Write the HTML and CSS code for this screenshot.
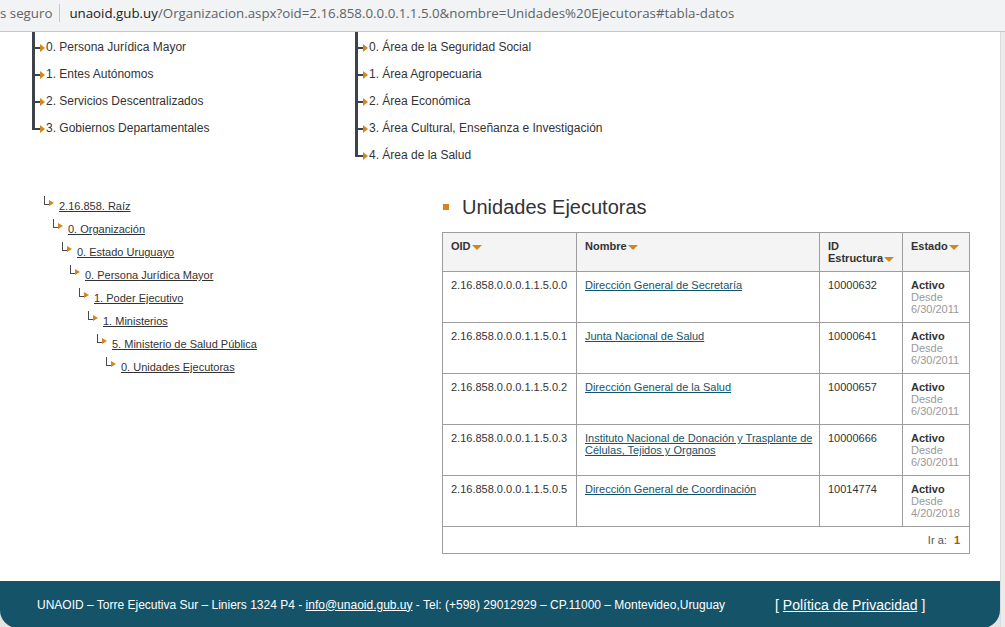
FILE: index.html
```
<!DOCTYPE html>
<html lang="es">
<head>
    <meta charset="UTF-8">
    <meta name="viewport" content="width=device-width, initial-scale=1.0">
    <title>Unidades Ejecutoras - UNAOID</title>
    <link rel="stylesheet" href="styles.css">
</head>
<body>
    <div class="omnibox">
        <span class="security">s seguro</span>
        <span class="divider"></span>
        <span class="url"><span class="host">unaoid.gub.uy</span>/Organizacion.aspx?oid=2.16.858.0.0.0.1.1.5.0&amp;nombre=Unidades%20Ejecutoras#tabla-datos</span>
    </div>

    <div class="window">
        <div class="page">
            <main class="content">
                <!-- hijos de los nodos anteriores -->
                <div class="branches">
                    <ul class="branch">
                        <li>0. Persona Jurídica Mayor</li>
                        <li>1. Entes Autónomos</li>
                        <li>2. Servicios Descentralizados</li>
                        <li>3. Gobiernos Departamentales</li>
                    </ul>
                    <ul class="branch">
                        <li>0. Área de la Seguridad Social</li>
                        <li>1. Área Agropecuaria</li>
                        <li>2. Área Económica</li>
                        <li>3. Área Cultural, Enseñanza e Investigación</li>
                        <li>4. Área de la Salud</li>
                    </ul>
                </div>

                <div class="detail">
                    <ul class="crumbs">
                        <li class="lvl-0"><a href="#">2.16.858. Raíz</a></li>
                        <li class="lvl-1"><a href="#">0. Organización</a></li>
                        <li class="lvl-2"><a href="#">0. Estado Uruguayo</a></li>
                        <li class="lvl-3"><a href="#">0. Persona Jurídica Mayor</a></li>
                        <li class="lvl-4"><a href="#">1. Poder Ejecutivo</a></li>
                        <li class="lvl-5"><a href="#">1. Ministerios</a></li>
                        <li class="lvl-6"><a href="#">5. Ministerio de Salud Pública</a></li>
                        <li class="lvl-7"><a href="#">0. Unidades Ejecutoras</a></li>
                    </ul>

                    <section class="listado" id="tabla-datos">
                        <h2>Unidades Ejecutoras</h2>
                        <table>
                            <colgroup>
                                <col class="col-oid">
                                <col class="col-nombre">
                                <col class="col-id">
                                <col class="col-estado">
                            </colgroup>
                            <thead>
                                <tr>
                                    <th><span class="nowrap">OID<span class="sort"></span></span></th>
                                    <th><span class="nowrap">Nombre<span class="sort"></span></span></th>
                                    <th>ID <span class="nowrap">Estructura<span class="sort"></span></span></th>
                                    <th><span class="nowrap">Estado<span class="sort"></span></span></th>
                                </tr>
                            </thead>
                            <tbody>
                                <tr>
                                    <td>2.16.858.0.0.0.1.1.5.0.0</td>
                                    <td><a href="#">Dirección General de Secretaría</a></td>
                                    <td>10000632</td>
                                    <td class="estado"><strong>Activo</strong><span class="desde">Desde 6/30/2011</span></td>
                                </tr>
                                <tr>
                                    <td>2.16.858.0.0.0.1.1.5.0.1</td>
                                    <td><a href="#">Junta Nacional de Salud</a></td>
                                    <td>10000641</td>
                                    <td class="estado"><strong>Activo</strong><span class="desde">Desde 6/30/2011</span></td>
                                </tr>
                                <tr>
                                    <td>2.16.858.0.0.0.1.1.5.0.2</td>
                                    <td><a href="#">Dirección General de la Salud</a></td>
                                    <td>10000657</td>
                                    <td class="estado"><strong>Activo</strong><span class="desde">Desde 6/30/2011</span></td>
                                </tr>
                                <tr>
                                    <td>2.16.858.0.0.0.1.1.5.0.3</td>
                                    <td><a href="#">Instituto Nacional de Donación y Trasplante de Células, Tejidos y Organos</a></td>
                                    <td>10000666</td>
                                    <td class="estado"><strong>Activo</strong><span class="desde">Desde 6/30/2011</span></td>
                                </tr>
                                <tr>
                                    <td>2.16.858.0.0.0.1.1.5.0.5</td>
                                    <td><a href="#">Dirección General de Coordinación</a></td>
                                    <td>10014774</td>
                                    <td class="estado"><strong>Activo</strong><span class="desde">Desde 4/20/2018</span></td>
                                </tr>
                            </tbody>
                            <tfoot>
                                <tr>
                                    <td colspan="4" class="paginas">Ir a: <strong>1</strong></td>
                                </tr>
                            </tfoot>
                        </table>
                    </section>
                </div>
            </main>

            <footer>
                <p class="legal">UNAOID – Torre Ejecutiva Sur – Liniers 1324 P4 - <a href="#">info@unaoid.gub.uy</a> - Tel: (+598) 29012929 – CP.11000 – Montevideo,Uruguay</p>
                <p class="privacidad">[ <a href="#">Política de Privacidad</a> ]</p>
            </footer>
        </div>
        <div class="scrollbar"></div>
    </div>
</body>
</html>
```

FILE: styles.css
```
* {
    box-sizing: border-box;
}

html, body {
    margin: 0;
    height: 100%;
    overflow: hidden;
}

body {
    font-family: "Liberation Sans", Arial, sans-serif;
    color: #333;
    background: #fff;
}

/* barra de direcciones */
.omnibox {
    height: 32px;
    display: flex;
    align-items: center;
    padding-bottom: 5px;
    background: #f1f3f4;
    border-bottom: 1px solid #c6c6c6;
    font-family: "Open Sans", sans-serif;
    font-size: 13.3px;
    color: #5f6368;
    white-space: nowrap;
}

.divider {
    width: 1px;
    height: 18px;
    margin: 0 9px 0 7px;
    background: #c4c7c5;
}

.host {
    color: #202124;
}

.window {
    display: flex;
    height: calc(100% - 32px);
    background: #e3e3e3;
}

.page {
    width: 1000px;
}

.content {
    height: 549px;
    background: #fff;
}

.scrollbar {
    width: 5px;
    background: #ececec;
    border-left: 1px solid #dcdcdc;
}

/* ramas superiores */
.branches {
    display: flex;
    padding: 2px 0 0 32px;
}

.branch {
    list-style: none;
    margin: 0;
    padding: 0;
    width: 323px;
    font-size: 12px;
}

.branch li {
    position: relative;
    line-height: 27px;
    padding-left: 14px;
    background: linear-gradient(#3d434a, #3d434a) no-repeat 0 0 / 3px 100%;
}

.branch li:first-child {
    margin-top: -2px;
    padding-top: 2px;
}

.branch li:last-child {
    background-size: 3px 15px;
}

.branch li::before {
    content: "";
    position: absolute;
    left: 3px;
    bottom: 12px;
    width: 6px;
    height: 2px;
    background: #3d434a;
}

.branch li::after {
    content: "";
    position: absolute;
    left: 8px;
    bottom: 9px;
    border-left: 5px solid #d2861c;
    border-top: 4px solid transparent;
    border-bottom: 4px solid transparent;
}

.detail {
    display: flex;
    margin-top: 26px;
    padding-left: 43px;
}

/* ruta del nodo */
.crumbs {
    list-style: none;
    margin: 0;
    padding: 0;
    width: 399px;
    font-size: 11px;
}

.crumbs li {
    position: relative;
    line-height: 23px;
    padding-left: 16px;
}

.crumbs li::before {
    content: "";
    position: absolute;
    left: 1px;
    top: 1px;
    width: 6px;
    height: 8px;
    border-left: 1px solid #4a4a4a;
    border-bottom: 1px solid #4a4a4a;
}

.crumbs li::after {
    content: "";
    position: absolute;
    left: 6px;
    top: 5px;
    border-left: 5px solid #d2861c;
    border-top: 3px solid transparent;
    border-bottom: 3px solid transparent;
}

.crumbs a {
    color: #333;
}

.lvl-1 { margin-left: 9px; }
.lvl-2 { margin-left: 18px; }
.lvl-3 { margin-left: 26px; }
.lvl-4 { margin-left: 35px; }
.lvl-5 { margin-left: 44px; }
.lvl-6 { margin-left: 53px; }
.lvl-7 { margin-left: 62px; }

/* tabla */
.listado {
    width: 528px;
}

.listado h2 {
    display: flex;
    align-items: center;
    margin: 0;
    font-size: 20px;
    font-weight: normal;
    line-height: 24px;
}

.listado h2::before {
    content: "";
    width: 6px;
    height: 6px;
    margin: 0 13px 0 1px;
    background: #d2861c;
}

table {
    width: 528px;
    margin-top: 13px;
    border-collapse: collapse;
    font-size: 11px;
    line-height: 12px;
}

.col-oid { width: 134px; }
.col-nombre { width: 244px; }
.col-id { width: 83px; }
.col-estado { width: 67px; }

th, td {
    border: 1px solid #9d9d9d;
    padding: 7px 6px 7px 8px;
    text-align: left;
    vertical-align: top;
}

th {
    background: #f4f4f4;
    font-weight: bold;
}

.nowrap {
    white-space: nowrap;
}

.sort {
    display: inline-block;
    margin-left: 1px;
    vertical-align: middle;
    border-top: 5px solid #d2861c;
    border-left: 5px solid transparent;
    border-right: 5px solid transparent;
}

td a {
    color: #15536a;
}

.estado strong {
    display: block;
}

.desde {
    color: #999;
}

td.paginas {
    text-align: right;
    padding-right: 9px;
    color: #555;
}

.paginas strong {
    margin-left: 4px;
    color: #9a6200;
}

/* pie */
footer {
    height: 47px;
    display: flex;
    align-items: center;
    padding-left: 37px;
    background: #155369;
    border-radius: 0 0 18px 18px;
    color: #fff;
}

footer p {
    margin: 0;
}

footer a {
    color: #fff;
}

.legal {
    font-size: 12px;
}

.privacidad {
    margin-left: 50px;
    font-size: 14px;
}
```
